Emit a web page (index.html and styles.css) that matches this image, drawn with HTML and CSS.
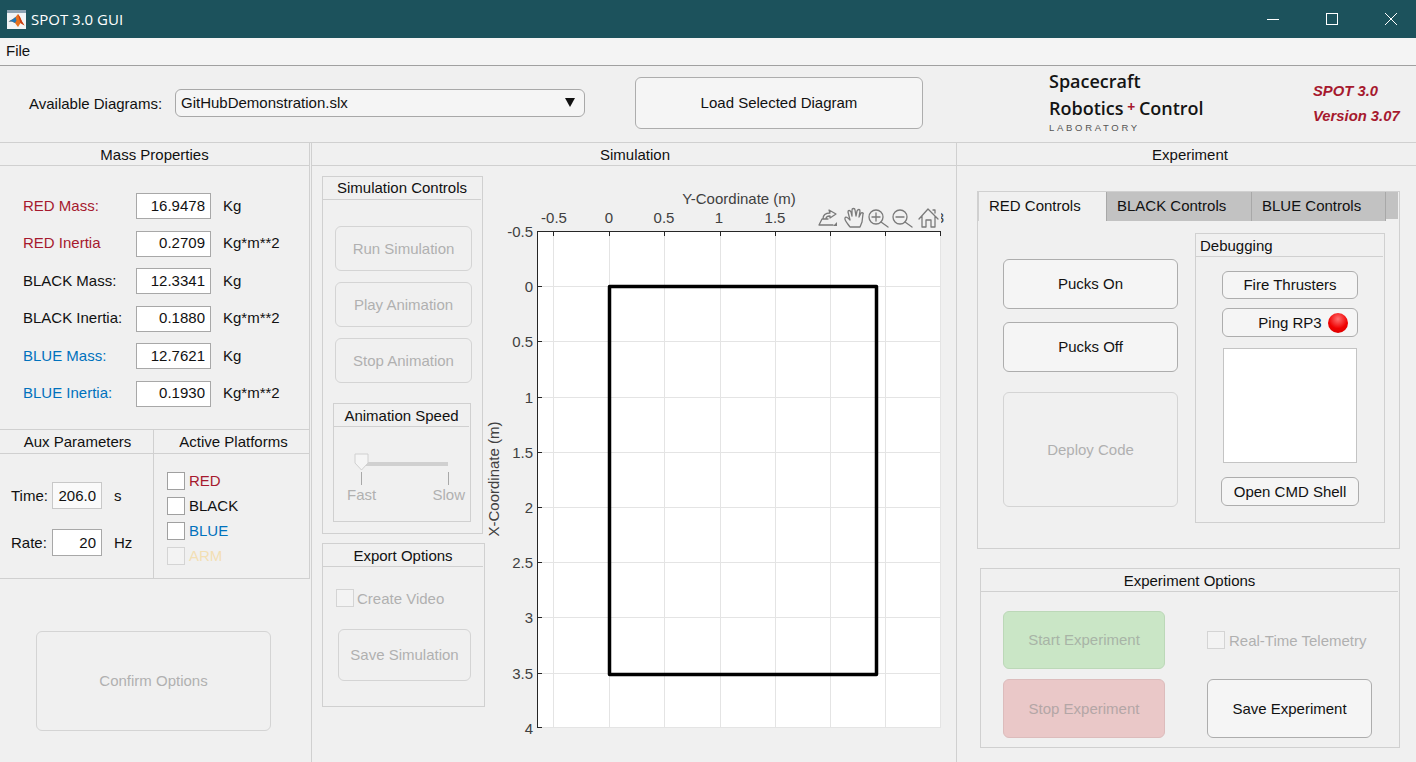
FILE: index.html
```html
<!DOCTYPE html>
<html lang="en">
<head>
    <meta charset="UTF-8">
    <meta name="viewport" content="width=device-width, initial-scale=1.0">
    <title>SPOT 3.0 GUI</title>
    <link rel="stylesheet" href="styles.css">
</head>
<body>

<!-- Window title -->
<header class="titlebar">
    <svg class="app-icon" width="19" height="19" viewBox="0 0 19 19">
        <rect x="0" y="0" width="19" height="19" fill="#f2f4f6"/>
        <rect x="0" y="0" width="19" height="3" fill="#8fa3b3"/>
        <path d="M1.500 11.500 L6 9 L8.500 7 L11 4 L13 7 L15 11.500 L17.500 15.500 L13.500 13 L11 17 L8 13 L5 11.500 Z" fill="#e8701e"/>
        <path d="M1.500 11.500 L6 9 L8.500 7 L9.500 10.500 L8 13 L5 11.500 Z" fill="#1f77b8"/>
        <path d="M11 4 L13 7 L15 11.500 L17.500 15.500 L13.500 13 L12 8 Z" fill="#c63c16"/>
    </svg>
    <span class="title-text">SPOT 3.0 GUI</span>
    <div class="window-buttons">
        <svg width="14" height="14" viewBox="0 0 14 14"><path d="M1 7.500 H13" stroke="#fff" stroke-width="1"/></svg>
        <svg width="14" height="14" viewBox="0 0 14 14"><rect x="1.500" y="1.500" width="11" height="11" fill="none" stroke="#fff" stroke-width="1"/></svg>
        <svg width="14" height="14" viewBox="0 0 14 14"><path d="M1 1 L13 13 M13 1 L1 13" stroke="#fff" stroke-width="1"/></svg>
    </div>
</header>

<nav class="menubar">File</nav>

<!-- Diagram selection and logo -->
<section class="topbar">
    <label class="diagram-label">Available Diagrams:</label>
    <div class="dropdown">GitHubDemonstration.slx<span class="dropdown-arrow"></span></div>
    <button class="btn load-btn">Load Selected Diagram</button>
    <div class="logo">
        <div class="logo-line">Spacecraft</div>
        <div class="logo-line logo-line-two">Robotics <span class="logo-plus">+</span> Control</div>
        <div class="logo-sub">LABORATORY</div>
    </div>
    <div class="version">
        <div>SPOT 3.0</div>
        <div>Version 3.07</div>
    </div>
</section>

<main class="main">

    <!-- Left column -->
    <div class="col-left">
        <section class="panel mass-panel">
            <h2 class="panel-title">Mass Properties</h2>
            <div class="mass-grid">
                <span class="red">RED Mass:</span><input class="field" value="16.9478"><span>Kg</span>
                <span class="red">RED Inertia</span><input class="field" value="0.2709"><span>Kg*m**2</span>
                <span>BLACK Mass:</span><input class="field" value="12.3341"><span>Kg</span>
                <span>BLACK Inertia:</span><input class="field" value="0.1880"><span>Kg*m**2</span>
                <span class="blue">BLUE Mass:</span><input class="field" value="12.7621"><span>Kg</span>
                <span class="blue">BLUE Inertia:</span><input class="field" value="0.1930"><span>Kg*m**2</span>
            </div>
        </section>
        <div class="aux-row">
            <section class="panel aux-panel">
                <h2 class="panel-title aux-title">Aux Parameters</h2>
                <div class="aux-grid">
                    <span class="aux-label">Time:</span><input class="field field-time" value="206.0"><span class="aux-unit">s</span>
                    <span class="aux-label">Rate:</span><input class="field field-rate" value="20"><span class="aux-unit">Hz</span>
                </div>
            </section>
            <section class="panel platforms-panel">
                <h2 class="panel-title aux-title">Active Platforms</h2>
                <div class="platforms">
                    <div class="check-row red"><span class="checkbox"></span>RED</div>
                    <div class="check-row"><span class="checkbox"></span>BLACK</div>
                    <div class="check-row blue"><span class="checkbox"></span>BLUE</div>
                    <div class="check-row arm"><span class="checkbox checkbox-off"></span>ARM</div>
                </div>
            </section>
        </div>
        <button class="btn confirm-btn" disabled>Confirm Options</button>
    </div>

    <!-- Simulation column -->
    <section class="col-mid">
        <h2 class="panel-title sim-title">Simulation</h2>
        <div class="sim-body">
            <div class="sim-side">
                <section class="panel sim-controls">
                    <h2 class="panel-title title-inset">Simulation Controls</h2>
                    <div class="sim-buttons">
                        <button class="btn sim-btn" disabled>Run Simulation</button>
                        <button class="btn sim-btn" disabled>Play Animation</button>
                        <button class="btn sim-btn" disabled>Stop Animation</button>
                    </div>
                    <section class="panel speed-panel">
                        <h2 class="panel-title title-inset">Animation Speed</h2>
                        <div class="slider">
                            <div class="slider-track"></div>
                            <svg class="slider-thumb" width="15" height="18" viewBox="0 0 15 18"><path d="M1 1 H14 V10 L7.500 17 L1 10 Z" fill="#f5f5f5" stroke="#d0d0d0"/></svg>
                            <div class="slider-ticks"><span></span><span></span></div>
                            <div class="slider-labels"><span>Fast</span><span>Slow</span></div>
                        </div>
                    </section>
                </section>
                <section class="panel export-panel">
                    <h2 class="panel-title title-inset">Export Options</h2>
                    <div class="check-row muted video-check"><span class="checkbox checkbox-off"></span>Create Video</div>
                    <button class="btn save-sim" disabled>Save Simulation</button>
                </section>
            </div>

            <!-- viewBox uses window coordinates -->
            <svg class="chart" width="470" height="596" viewBox="486 166 470 596">
                <rect x="537" y="231" width="403" height="497" fill="#fff"/>
                <g stroke="#e4e4e4" stroke-width="1">
                    <path d="M553.500 231 V728 M609.500 231 V728 M664.500 231 V728 M720.500 231 V728 M775.500 231 V728 M830.500 231 V728 M885.500 231 V728 M940.500 231 V728"/>
                    <path d="M537 286.500 H940 M537 341.500 H940 M537 397.500 H940 M537 452.500 H940 M537 507.500 H940 M537 562.500 H940 M537 617.500 H940 M537 673.500 H940 M537 727.500 H940"/>
                </g>
                <g stroke="#262626" stroke-width="1">
                    <path d="M537.500 231 V728 M537 231.500 H941"/>
                    <path d="M553.500 231 V236 M609.500 231 V236 M664.500 231 V236 M720.500 231 V236 M775.500 231 V236 M830.500 231 V236 M885.500 231 V236 M940.500 231 V236"/>
                    <path d="M537 286.500 H542 M537 341.500 H542 M537 397.500 H542 M537 452.500 H542 M537 507.500 H542 M537 562.500 H542 M537 617.500 H542 M537 673.500 H542 M537 727.500 H542"/>
                </g>
                <rect x="609.500" y="286.500" width="267" height="388" fill="none" stroke="#000" stroke-width="3.500" stroke-linejoin="round"/>

                <g class="tick-text" text-anchor="middle">
                    <text x="554" y="223">-0.5</text>
                    <text x="609" y="223">0</text>
                    <text x="664" y="223">0.5</text>
                    <text x="719" y="223">1</text>
                    <text x="775" y="223">1.5</text>
                    <text x="830" y="223">2</text>
                    <text x="885" y="223">2.5</text>
                    <text x="940" y="223">3</text>
                </g>
                <g class="tick-text" text-anchor="end">
                    <text x="533" y="237">-0.5</text>
                    <text x="533" y="292">0</text>
                    <text x="533" y="347">0.5</text>
                    <text x="533" y="403">1</text>
                    <text x="533" y="458">1.5</text>
                    <text x="533" y="513">2</text>
                    <text x="533" y="568">2.5</text>
                    <text x="533" y="623">3</text>
                    <text x="533" y="679">3.5</text>
                    <text x="533" y="734">4</text>
                </g>
                <text class="axis-label" x="739" y="204" text-anchor="middle">Y-Coordinate (m)</text>
                <text class="axis-label" text-anchor="middle" transform="translate(499 479) rotate(-90)">X-Coordinate (m)</text>

                <!-- Axes toolbar over the tick labels -->
                <rect x="816" y="206" width="125" height="24" fill="#f0f0f0"/>
                <g fill="none" stroke="#7a7a7a" stroke-width="1.300" stroke-linecap="round" stroke-linejoin="round">
                    <path d="M819 225 H833 M819 225 L822 219 H828 M823 219 C823 215 826 213 830 213 L829 210 L836 214 L830 218 L830 216 C828 216 826 217 826 219"/>
                    <path d="M850 227 C848 224 844 220 845 218 C846 216 848 218 850 220 L848 212 C848 210 850 210 851 212 L852 216 L852 210 C852 208 855 208 855 210 L856 216 L857 211 C858 209 860 209 860 211 L859 217 L861 213 C862 212 864 213 863 214 L862 222 L860 227 Z"/>
                    <circle cx="876" cy="217" r="7"/>
                    <path d="M872 217 H880 M876 213 V221 M881 222 L888 227"/>
                    <circle cx="900" cy="217" r="7"/>
                    <path d="M896 217 H904 M905 222 L912 227"/>
                    <path d="M919 219 L928 209 L938 219 M922 216 V227 H926 V220 H931 V227 H935 V216 M933 210 H935 V213"/>
                </g>
                <path d="M837 222 V226 H833 Z" fill="#7a7a7a"/>
            </svg>
        </div>
    </section>

    <!-- Experiment column -->
    <section class="col-right">
        <h2 class="panel-title experiment-title">Experiment</h2>
        <div class="tab-box">
            <div class="tabs">
                <div class="tab tab-active">RED Controls</div>
                <div class="tab tab-black">BLACK Controls</div>
                <div class="tab tab-blue">BLUE Controls</div>
                <div class="tab-rest"></div>
            </div>
            <div class="tab-body">
                <div class="pucks">
                    <button class="btn pucks-btn">Pucks On</button>
                    <button class="btn pucks-btn">Pucks Off</button>
                    <button class="btn deploy-btn" disabled>Deploy Code</button>
                </div>
                <section class="panel debug-panel">
                    <h2 class="panel-title title-inset debug-title">Debugging</h2>
                    <div class="debug-body">
                        <button class="btn debug-btn">Fire Thrusters</button>
                        <button class="btn debug-btn ping-btn">Ping RP3<span class="led"></span></button>
                        <div class="debug-output"></div>
                        <button class="btn debug-btn cmd-btn">Open CMD Shell</button>
                    </div>
                </section>
            </div>
        </div>
        <section class="panel exp-options">
            <h2 class="panel-title title-inset">Experiment Options</h2>
            <div class="exp-grid">
                <button class="btn start-btn" disabled>Start Experiment</button>
                <div class="check-row muted telemetry"><span class="checkbox checkbox-off"></span>Real-Time Telemetry</div>
                <button class="btn stop-btn" disabled>Stop Experiment</button>
                <button class="btn save-exp">Save Experiment</button>
            </div>
        </section>
    </section>
</main>

</body>
</html>
```
FILE: styles.css
```css
* {
    box-sizing: border-box;
}
body {
    margin: 0;
    width: 1416px;
    height: 762px;
    overflow: hidden;
    background-color: #f0f0f0;
    font-family: "Liberation Sans", Arial, sans-serif;
    font-size: 15px;
    color: #111;
}

/* Title and menu */
.titlebar {
    display: flex;
    align-items: center;
    height: 38px;
    padding-left: 7px;
    background-color: #1c525c;
    color: #fff;
}
.app-icon {
    margin-right: 5px;
}
.title-text {
    font-family: "Open Sans", sans-serif;
    font-size: 15px;
}
.window-buttons {
    display: flex;
    gap: 45px;
    margin-left: auto;
    margin-right: 18px;
}
.menubar {
    height: 28px;
    padding: 4px 6px 0;
    background-color: #f4f4f4;
    border-bottom: 1px solid #a0a0a0;
}

/* Top strip */
.topbar {
    display: flex;
    align-items: center;
    height: 77px;
    padding: 0 0 2px 29px;
    border-bottom: 1px solid #d0d0d0;
}
.diagram-label {
    width: 146px;
}
.dropdown {
    position: relative;
    width: 410px;
    height: 28px;
    padding: 4px 5px;
    background-color: #f5f5f5;
    border: 1px solid #a8a8a8;
    border-radius: 6px;
}
.dropdown-arrow {
    position: absolute;
    right: 9px;
    top: 8px;
    border-left: 5px solid transparent;
    border-right: 5px solid transparent;
    border-top: 9px solid #111;
}
.btn {
    padding: 0 0 1px;
    background-color: #f5f5f5;
    border: 1px solid #adadad;
    border-radius: 6px;
    font-family: inherit;
    font-size: inherit;
    color: #111;
}
.btn:disabled {
    background-color: #f0f0f0;
    border-color: #d4d4d4;
    color: #b0b0b0;
}
.load-btn {
    width: 288px;
    height: 52px;
    margin-left: 50px;
}
.logo {
    width: 264px;
    margin-left: 126px;
    margin-bottom: 3px;
    font-family: "Open Sans", sans-serif;
    font-weight: 600;
    font-size: 18px;
    line-height: 25px;
    color: #141414;
}
.logo-line-two {
    word-spacing: -1px;
}
.logo-plus {
    color: #a6192e;
    font-size: 14px;
    font-weight: 700;
    vertical-align: 3px;
}
.logo-sub {
    font-family: "Liberation Sans", sans-serif;
    font-weight: 400;
    font-size: 9.500px;
    line-height: 14px;
    letter-spacing: 2.700px;
    color: #555;
}
.version {
    margin-top: 2px;
    font-style: italic;
    font-weight: bold;
    font-size: 14.800px;
    line-height: 25px;
    color: #a6192e;
}

/* Main layout */
.main {
    display: flex;
    height: 620px;
}
.panel {
    border: 1px solid #d0d0d0;
}
.panel-title {
    height: 23px;
    margin: 0;
    border-bottom: 1px solid #d0d0d0;
    font-size: inherit;
    font-weight: normal;
    line-height: 24px;
    text-align: center;
}
.title-inset {
    margin-right: 1px;
    line-height: 23px;
}
.aux-title {
    height: 24px;
    padding-left: 2px;
    line-height: 24px;
}
.platforms-panel .aux-title {
    padding-left: 4px;
}
.red {
    color: #a6192e;
}
.blue {
    color: #0072bd;
}
.field {
    width: 75px;
    height: 26px;
    padding: 0 5px 2px 4px;
    background-color: #fff;
    border: 1px solid #a8a8a8;
    border-radius: 0;
    font-family: inherit;
    font-size: inherit;
    color: #111;
    text-align: right;
}

/* Left column */
.col-left {
    display: flex;
    flex-direction: column;
    width: 311px;
    padding-right: 1px;
}
.mass-panel {
    height: 287px;
    border-width: 0 1px 1px 0;
}
.mass-grid {
    display: grid;
    grid-template-columns: 113px 75px auto;
    grid-auto-rows: 26px;
    row-gap: 11.500px;
    align-items: center;
    padding: 27px 0 0 23px;
}
.mass-grid span {
    padding-bottom: 2px;
}
.mass-grid .field + span {
    margin-left: 12px;
}
.aux-row {
    display: flex;
    height: 149px;
    border-right: 1px solid #d0d0d0;
    border-bottom: 1px solid #d0d0d0;
}
.aux-panel {
    width: 154px;
    border-width: 0 1px 0 0;
}
.platforms-panel {
    flex: 1;
    border: 0;
}
.aux-grid {
    display: grid;
    grid-template-columns: 41px 50px auto;
    grid-auto-rows: 27px;
    row-gap: 20px;
    align-items: center;
    padding: 28px 0 0 11px;
}
.aux-label {
    padding-bottom: 1px;
}
.field-time,
.field-rate {
    width: 50px;
    height: 27px;
    padding-bottom: 0;
}
.field-time {
    background-color: #fafafa;
    border-color: #c8c8c8;
}
.aux-unit {
    margin-left: 12px;
}
.platforms {
    display: flex;
    flex-direction: column;
    gap: 7px;
    padding: 18px 0 0 13px;
}
.platforms .check-row {
    padding-bottom: 2px;
}
.platforms .checkbox {
    align-self: flex-start;
}
.check-row {
    display: flex;
    align-items: center;
    gap: 4px;
    height: 18px;
}
.checkbox {
    flex: none;
    width: 18px;
    height: 18px;
    background-color: #fff;
    border: 1px solid #a0a0a0;
}
.checkbox-off {
    background-color: #f3f3f3;
    border-color: #d4d4d4;
}
.arm {
    color: #f3dfb4;
}
.muted {
    color: #b0b0b0;
}
.confirm-btn {
    width: 235px;
    height: 100px;
    margin: 52px 0 0 36px;
}

/* Simulation column */
.col-mid {
    width: 646px;
    border-left: 1px solid #d0d0d0;
    border-right: 1px solid #d0d0d0;
}
.sim-title {
    padding-left: 2px;
}
.sim-body {
    display: flex;
}
.sim-side {
    width: 174px;
    padding: 10px 0 0 10px;
}
.sim-controls {
    width: 161px;
    height: 358px;
}
.sim-controls > .title-inset {
    line-height: 21px;
}
.sim-buttons {
    display: flex;
    flex-direction: column;
    gap: 11px;
    padding: 26px 0 0 12px;
}
.sim-btn {
    width: 137px;
    height: 45px;
}
.speed-panel {
    width: 138px;
    height: 119px;
    margin: 20px 0 0 10px;
}
.slider {
    position: relative;
    height: 94px;
    color: #b0b0b0;
}
.slider-track {
    position: absolute;
    left: 26px;
    top: 35px;
    width: 88px;
    height: 4px;
    background-color: #d0d0d0;
}
.slider-thumb {
    position: absolute;
    left: 20px;
    top: 26px;
}
.slider-ticks {
    display: flex;
    justify-content: space-between;
    position: absolute;
    left: 27px;
    top: 45px;
    width: 88px;
}
.slider-ticks span {
    width: 1px;
    height: 13px;
    background-color: #a8a8a8;
}
.slider-labels {
    display: flex;
    justify-content: space-between;
    position: absolute;
    left: 13px;
    top: 59px;
    width: 118px;
}
.export-panel {
    width: 163px;
    height: 164px;
    margin-top: 9px;
}
.video-check {
    gap: 3px;
    margin: 22px 0 0 13px;
}
.save-sim {
    display: block;
    width: 133px;
    height: 52px;
    margin: 22px 0 0 15px;
}
.chart {
    display: block;
    flex: none;
}
.tick-text text,
.axis-label {
    font-size: 15px;
    fill: #404040;
}

/* Experiment column */
.col-right {
    flex: 1;
}
.experiment-title {
    padding-left: 7px;
}
.tab-box {
    width: 423px;
    height: 358px;
    margin: 25px 0 0 20px;
    border: 1px solid #d0d0d0;
}
.tabs {
    display: flex;
    height: 29px;
}
.tab {
    padding: 5px 0 0 10px;
    background-color: #c2c2c2;
    border-right: 1px solid #a8a8a8;
}
.tab-active {
    width: 129px;
    background-color: #f0f0f0;
    border-left: 1px solid #d0d0d0;
}
.tab-black {
    width: 145px;
}
.tab-blue {
    width: 134px;
}
.tab-rest {
    width: 12px;
    height: 27px;
    background-color: #c2c2c2;
}
.tab-body {
    display: flex;
}
.pucks {
    display: flex;
    flex-direction: column;
    width: 217px;
    padding: 38px 0 0 25px;
}
.pucks-btn {
    width: 175px;
    height: 50px;
    margin-bottom: 13px;
}
.deploy-btn {
    width: 175px;
    height: 115px;
    margin-top: 7px;
}
.debug-panel {
    width: 190px;
    height: 290px;
    margin-top: 12px;
}
.debug-title {
    padding-left: 4px;
    text-align: left;
}
.debug-body {
    display: flex;
    flex-direction: column;
    align-items: center;
    padding-top: 14px;
}
.debug-btn {
    width: 136px;
    height: 28px;
    margin-bottom: 9px;
}
.ping-btn {
    position: relative;
    height: 29px;
    margin-bottom: 11px;
}
.led {
    position: absolute;
    right: 9px;
    top: 4px;
    width: 20px;
    height: 20px;
    border-radius: 50%;
    background: radial-gradient(circle at 50% 30%, #ff7070, #f00000 55%, #d00000);
}
.debug-output {
    width: 134px;
    height: 115px;
    background-color: #fff;
    border: 1px solid #c4c4c4;
}
.cmd-btn {
    width: 138px;
    height: 29px;
    margin: 14px 0 0;
}
.exp-options {
    width: 420px;
    height: 180px;
    margin: 19px 0 0 23px;
}
.exp-grid {
    display: grid;
    grid-template-columns: 162px 165px;
    grid-template-rows: 58px 59px;
    column-gap: 42px;
    row-gap: 10px;
    padding: 19px 0 0 22px;
}
.start-btn:disabled {
    background-color: #cae6c6;
    border-color: #bcd8b8;
    color: #a8b4a6;
}
.stop-btn:disabled {
    background-color: #eac8c8;
    border-color: #dcbcbc;
    color: #b4a6a6;
}
.telemetry {
    align-self: center;
    white-space: nowrap;
}
```
